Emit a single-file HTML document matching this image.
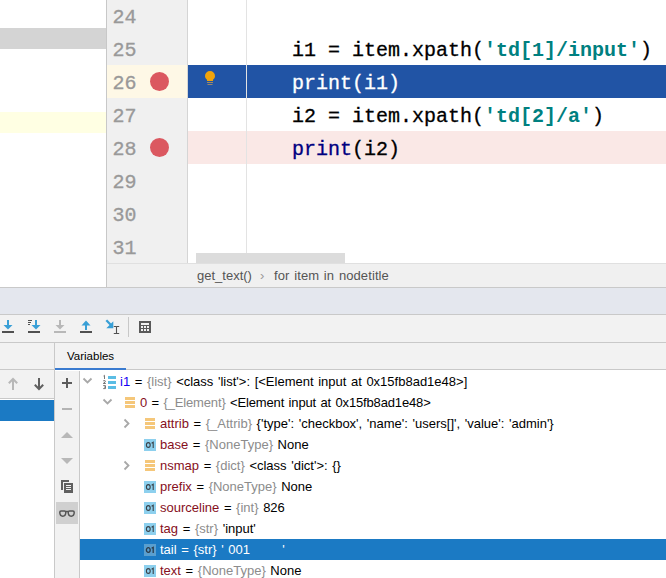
<!DOCTYPE html>
<html><head><meta charset="utf-8">
<style>
*{margin:0;padding:0;box-sizing:border-box}
html,body{width:666px;height:578px;overflow:hidden;background:#fff;position:relative}
body{font-family:"Liberation Sans",sans-serif}
.a{position:absolute}
.mono{font-family:"Liberation Mono",monospace;font-size:20px;white-space:pre;line-height:33px;-webkit-text-stroke:0.3px currentColor}
.ln{color:#999;left:112.5px}
.code{left:292px;color:#000}
.kw{color:#000080}
.str{color:#008080;font-weight:bold;-webkit-text-stroke:0}
.tr{position:absolute;left:0;height:21px;width:666px;font-size:13px;line-height:21px;white-space:pre;word-spacing:1px}
.nm{color:#860f1c}
.ty{color:#8c8c8c}
.ic01{position:absolute;width:12px;height:12px;background:#8ccbe8;color:#3d4a55;font-size:7px;font-weight:bold;line-height:12px;text-align:center;top:4px}
.icor{position:absolute;width:10px;height:11px;top:5px;background:linear-gradient(#f5c77a 0 3px,transparent 3px 4px,#f5c77a 4px 7px,transparent 7px 8px,#f5c77a 8px 11px)}
</style></head><body>

<!-- left panel -->
<div class="a" style="left:0;top:28px;width:106px;height:21px;background:#d4d4d4"></div>
<div class="a" style="left:0;top:112px;width:106px;height:21px;background:#ffffe3"></div>
<div class="a" style="left:106px;top:0;width:1px;height:287px;background:#c8c8c8"></div>
<!-- gutter -->
<div class="a" style="left:107px;top:0;width:80px;height:263px;background:#f0f0f0"></div>
<div class="a" style="left:107px;top:65px;width:80px;height:33px;background:#fef8e6"></div>
<div class="a" style="left:187px;top:0;width:1px;height:263px;background:#d5d5d5"></div>
<!-- editor rows -->
<div class="a" style="left:188px;top:65px;width:478px;height:33px;background:#2154a5"></div>
<div class="a" style="left:188px;top:131px;width:478px;height:33px;background:#fae8e6"></div>
<div class="a" style="left:246px;top:0;width:1px;height:253px;background:#e3e3e3"></div>
<!-- line numbers -->
<div class="a mono ln" style="top:1px">24</div>
<div class="a mono ln" style="top:34px">25</div>
<div class="a mono ln" style="top:67px">26</div>
<div class="a mono ln" style="top:100px">27</div>
<div class="a mono ln" style="top:133px">28</div>
<div class="a mono ln" style="top:166px">29</div>
<div class="a mono ln" style="top:199px">30</div>
<div class="a mono ln" style="top:232px">31</div>
<!-- breakpoints -->
<div class="a" style="left:150px;top:72px;width:19px;height:19px;border-radius:50%;background:#db5860"></div>
<div class="a" style="left:150px;top:138px;width:19px;height:19px;border-radius:50%;background:#db5860"></div>
<!-- bulb -->
<svg class="a" style="left:203px;top:70px" width="14" height="16" viewBox="0 0 14 16">
<path d="M7 1a5 5 0 0 0-5 5c0 1.8 1 3 2 3.8V11h6V9.8c1-0.8 2-2 2-3.8a5 5 0 0 0-5-5z" fill="#f0a30a"/>
<rect x="4" y="12" width="6" height="1" fill="#9a8a6a"/>
<rect x="4.5" y="14" width="5" height="1" fill="#9a8a6a"/>
</svg>
<!-- code -->
<div class="a mono code" style="top:34px">i1 = item.xpath(<span class="str">'td[1]/input'</span>)</div>
<div class="a mono code" style="top:67px;color:#fff">print(i1)</div>
<div class="a mono code" style="top:100px">i2 = item.xpath(<span class="str">'td[2]/a'</span>)</div>
<div class="a mono code" style="top:133px"><span class="kw">print</span>(i2)</div>
<!-- scrollbar -->
<div class="a" style="left:196px;top:253px;width:149px;height:10px;background:#dcdcdc"></div>
<!-- breadcrumb -->
<div class="a" style="left:107px;top:263px;width:559px;height:24px;background:#f0f0f0;border-top:1px solid #e0e0e0"></div>
<div class="a" style="left:197px;top:266px;font-size:13px;color:#555;white-space:pre;line-height:20px">get_text()</div>
<div class="a" style="left:260px;top:266px;font-size:13px;color:#999;line-height:20px">›</div>
<div class="a" style="left:274px;top:266px;font-size:13px;color:#555;white-space:pre;line-height:20px;word-spacing:1px;letter-spacing:0.1px">for item in nodetitle</div>
<div class="a" style="left:0;top:287px;width:666px;height:1px;background:#c9c9c9"></div>
<!-- debug header band -->
<div class="a" style="left:0;top:288px;width:666px;height:26px;background:#e4e7ee"></div>
<div class="a" style="left:0;top:314px;width:666px;height:1px;background:#c9c9c9"></div>
<!-- toolbar -->
<div class="a" style="left:0;top:315px;width:666px;height:27px;background:#f2f2f2"></div>
<div class="a" style="left:0;top:342px;width:666px;height:1px;background:#c9c9c9"></div>
<!-- variables header -->
<div class="a" style="left:0;top:343px;width:666px;height:27px;background:#f2f2f2"></div>
<div class="a" style="left:0;top:369px;width:54px;height:1px;background:#c9c9c9"></div>
<div class="a" style="left:54px;top:343px;width:1px;height:235px;background:#c9c9c9"></div>
<div class="a" style="left:67px;top:345.5px;font-size:11.5px;line-height:20px;color:#000">Variables</div>

<div class="a" style="left:55px;top:369px;width:611px;height:1px;background:#c9c9c9"></div>
<!-- frames panel -->
<div class="a" style="left:0;top:370px;width:54px;height:28px;background:#f2f2f2"></div>
<div class="a" style="left:55px;top:368px;width:71px;height:2px;background:#3a7bd0"></div>
<div class="a" style="left:0;top:398px;width:54px;height:1px;background:#c9c9c9"></div>
<div class="a" style="left:0;top:400px;width:54px;height:21px;background:#1b7ac4"></div>
<!-- variables side column -->
<div class="a" style="left:55px;top:371px;width:24px;height:207px;background:#f2f2f2"></div>
<div class="a" style="left:79px;top:371px;width:1px;height:207px;background:#c9c9c9"></div>
<div class="a" style="left:56px;top:502px;width:22px;height:22px;background:#d0d0d0"></div>
<!-- tree -->
<div class="a" style="left:80px;top:539px;width:586px;height:21px;background:#1b7ac4"></div>

<!-- toolbar icons -->
<svg class="a" style="left:0;top:316px" width="160" height="24" viewBox="0 316 160 24">
<g fill="#389fd6">
<rect x="7" y="320" width="2" height="6"/><path d="M3.5 325h9l-4.5 4.5z"/>
<rect x="35" y="320" width="2" height="6"/><path d="M31.5 325h9l-4.5 4.5z"/>
<rect x="85" y="325" width="2" height="5"/><path d="M81.5 325.5h9l-4.5-5z"/>
<path d="M106.3 320.3l5.2 5.2" stroke="#389fd6" stroke-width="2.3"/><path d="M113.3 321.3v7h-7z"/>
</g>
<g fill="#505050">
<rect x="2" y="331" width="12" height="2"/>
<rect x="28" y="331" width="12" height="2"/>
<rect x="28" y="320" width="4" height="1"/><rect x="28" y="322" width="3" height="1"/><rect x="28" y="324" width="2" height="1"/>
<rect x="80" y="331" width="12" height="2"/>
<path d="M113.8 326.5h2q0.7 0 0.7 0.7q0-0.7 0.7-0.7h2M116.5 327v6M113.8 333.5h2q0.7 0 0.7-0.7q0 0.7 0.7 0.7h2" fill="none" stroke="#505050" stroke-width="1.1"/>
</g>
<g fill="#b8b8b8">
<rect x="59" y="320" width="2" height="6"/><path d="M55.5 325h9l-4.5 4.5z"/>
<rect x="54" y="331" width="12" height="2"/>
</g>
<rect x="128" y="317" width="1" height="20" fill="#c8c8c8"/>
<rect x="139" y="321" width="12" height="12" fill="#5a5a5a"/>
<g fill="#f2f2f2">
<rect x="141" y="323" width="8" height="2"/>
<rect x="141" y="326" width="2" height="2"/><rect x="144" y="326" width="2" height="2"/><rect x="147" y="326" width="2" height="2"/>
<rect x="141" y="329" width="2" height="2"/><rect x="144" y="329" width="2" height="2"/><rect x="147" y="329" width="2" height="2"/>
</g>
</svg>
<!-- frames arrows -->
<svg class="a" style="left:0;top:372px" width="54" height="22" viewBox="0 372 54 22">
<path d="M13 379v11M8.8 383.3L13 379l4.2 4.3" stroke="#b8b8b8" stroke-width="2" fill="none"/>
<path d="M39 378v11M34.8 384.7L39 389l4.2-4.3" stroke="#606060" stroke-width="2" fill="none"/>
</svg>
<!-- variables side column icons -->
<svg class="a" style="left:55px;top:371px" width="24" height="160" viewBox="55 371 24 160">
<g fill="#5c5c5c"><rect x="62" y="382" width="10" height="2"/><rect x="66" y="378" width="2" height="10"/></g>
<rect x="62" y="408" width="10" height="2" fill="#b4b4b4"/>
<path d="M61 438h12l-6-6z" fill="#b8b8b8"/>
<path d="M61 458h12l-6 6z" fill="#b8b8b8"/>
<g fill="#606060"><path d="M61 480h8v2h-6v8h-2z"/><rect x="64" y="483" width="9" height="10"/></g>
<g fill="#f2f2f2"><rect x="66" y="485" width="5" height="1"/><rect x="66" y="487" width="5" height="1"/><rect x="66" y="489" width="5" height="1"/></g>
<path d="M59.8 512.3q0-1.3 1.3-1.3h3.4q1.3 0 1.3 1.3c0 2.4-1 3.9-3 3.9s-3-1.5-3-3.9zM68.2 512.3q0-1.3 1.3-1.3h3.4q1.3 0 1.3 1.3c0 2.4-1 3.9-3 3.9s-3-1.5-3-3.9zM65.5 511.6h3" stroke="#555" stroke-width="1.5" fill="none"/>
</svg>
<!-- tree rows -->
<svg class="a" style="left:80px;top:371px" width="100" height="207" viewBox="80 371 100 207">
<g fill="none" stroke="#a8a8a8" stroke-width="1.8">
<path d="M83.5 378.5l4 4 4-4"/>
<path d="M103.5 399.5l4 4 4-4"/>
<path d="M124.5 419.5l4 4-4 4"/>
<path d="M124.5 461.5l4 4-4 4"/>
</g>
<g fill="none" stroke="#777" stroke-width="1"><path d="M103.5 376l1-0.7V379"/><path d="M103.2 380.8q2.6-0.9 2.2 1l-2.2 1.7h2.6"/><path d="M103.2 385.6h2.3v3h-2.3M104 387.1h1.5"/></g>
<g fill="#5bbde4"><rect x="108" y="376" width="8" height="3"/><rect x="108" y="381" width="8" height="3"/><rect x="108" y="386" width="8" height="3"/></g>
<g fill="#f5c77a">
<rect x="125" y="397" width="10" height="3"/><rect x="125" y="401" width="10" height="3"/><rect x="125" y="405" width="10" height="3"/>
<rect x="145" y="418" width="10" height="3"/><rect x="145" y="422" width="10" height="3"/><rect x="145" y="426" width="10" height="3"/>
<rect x="145" y="460" width="10" height="3"/><rect x="145" y="464" width="10" height="3"/><rect x="145" y="468" width="10" height="3"/>
</g>
</svg>
<svg class="a" style="left:144px;top:439px" width="12" height="12"><rect width="12" height="12" fill="#8dd0ee"/><ellipse cx="4.3" cy="6" rx="1.9" ry="2.4" fill="none" stroke="#3a4148" stroke-width="1.1"/><path d="M7.6 4.3l1.6-1v5.6" fill="none" stroke="#3a4148" stroke-width="1.1"/></svg>
<svg class="a" style="left:144px;top:481px" width="12" height="12"><rect width="12" height="12" fill="#8dd0ee"/><ellipse cx="4.3" cy="6" rx="1.9" ry="2.4" fill="none" stroke="#3a4148" stroke-width="1.1"/><path d="M7.6 4.3l1.6-1v5.6" fill="none" stroke="#3a4148" stroke-width="1.1"/></svg>
<svg class="a" style="left:144px;top:502px" width="12" height="12"><rect width="12" height="12" fill="#8dd0ee"/><ellipse cx="4.3" cy="6" rx="1.9" ry="2.4" fill="none" stroke="#3a4148" stroke-width="1.1"/><path d="M7.6 4.3l1.6-1v5.6" fill="none" stroke="#3a4148" stroke-width="1.1"/></svg>
<svg class="a" style="left:144px;top:523px" width="12" height="12"><rect width="12" height="12" fill="#8dd0ee"/><ellipse cx="4.3" cy="6" rx="1.9" ry="2.4" fill="none" stroke="#3a4148" stroke-width="1.1"/><path d="M7.6 4.3l1.6-1v5.6" fill="none" stroke="#3a4148" stroke-width="1.1"/></svg>
<svg class="a" style="left:144px;top:544px" width="12" height="12"><rect width="12" height="12" fill="#5a9fcf"/><ellipse cx="4.3" cy="6" rx="1.9" ry="2.4" fill="none" stroke="#2c3a48" stroke-width="1.3"/><path d="M7.6 4.3l1.6-1v5.6" fill="none" stroke="#2c3a48" stroke-width="1.3"/></svg>
<svg class="a" style="left:144px;top:565px" width="12" height="12"><rect width="12" height="12" fill="#8dd0ee"/><ellipse cx="4.3" cy="6" rx="1.9" ry="2.4" fill="none" stroke="#3a4148" stroke-width="1.1"/><path d="M7.6 4.3l1.6-1v5.6" fill="none" stroke="#3a4148" stroke-width="1.1"/></svg>
<div class="tr" style="top:371px;left:120px"><span style="color:#1400f5">i1</span> = <span class="ty">{list}</span> &lt;class 'list'&gt;: [&lt;Element input at 0x15fb8ad1e48&gt;]</div>
<div class="tr" style="top:392px;left:140px;letter-spacing:-0.15px"><span class="nm">0</span> = <span class="ty">{_Element}</span> &lt;Element input at 0x15fb8ad1e48&gt;</div>
<div class="tr" style="top:413px;left:160px"><span class="nm">attrib</span> = <span class="ty">{_Attrib}</span> {'type': 'checkbox', 'name': 'users[]', 'value': 'admin'}</div>
<div class="tr" style="top:434px;left:160px"><span class="nm">base</span> = <span class="ty">{NoneType}</span> None</div>
<div class="tr" style="top:455px;left:160px"><span class="nm">nsmap</span> = <span class="ty">{dict}</span> &lt;class 'dict'&gt;: {}</div>
<div class="tr" style="top:476px;left:160px"><span class="nm">prefix</span> = <span class="ty">{NoneType}</span> None</div>
<div class="tr" style="top:497px;left:160px"><span class="nm">sourceline</span> = <span class="ty">{int}</span> 826</div>
<div class="tr" style="top:518px;left:160px"><span class="nm">tag</span> = <span class="ty">{str}</span> 'input'</div>
<div class="tr" style="top:539px;left:160px;color:#fff">tail = {str} ' 001       '</div>
<div class="tr" style="top:560px;left:160px"><span class="nm">text</span> = <span class="ty">{NoneType}</span> None</div>
</body></html>
